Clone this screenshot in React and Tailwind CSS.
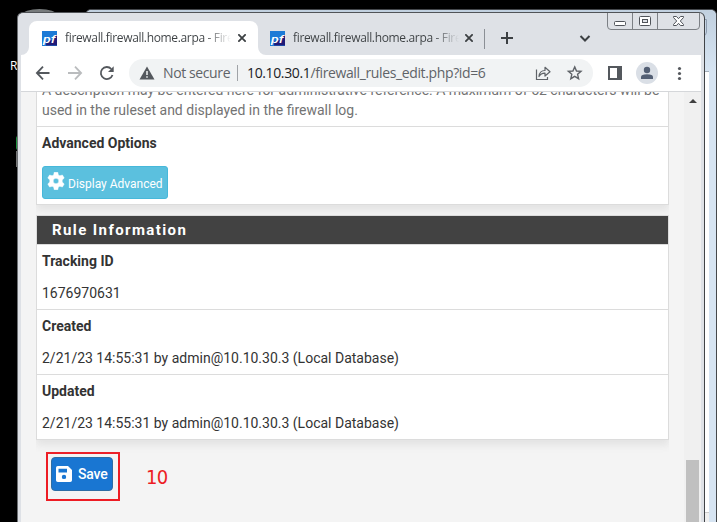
import React from 'react';

function PfIcon() {
  return (
    <svg width="15" height="15" viewBox="0 0 15 15" className="shrink-0">
      <rect width="15" height="15" fill="#1c7ad6" />
      <path d="M15 4V14.500H4L4.500 10L10 9L12 4Z" fill="#211b78" />
      <text x="1" y="11.500" fontSize="11.500" fontWeight="500" fontStyle="italic" fontFamily="Roboto, sans-serif" fill="#fff" textLength="12.500" lengthAdjust="spacingAndGlyphs">pf</text>
    </svg>
  );
}

function CloseIcon() {
  return (
    <svg width="8" height="8" viewBox="0 0 8 8" className="shrink-0">
      <path d="M.3 .3L7.700 7.700M7.700 .3L.3 7.700" stroke="#3c4043" strokeWidth="1.8" />
    </svg>
  );
}

function Tab({ active }) {
  return (
    <div className={active ? 'relative flex h-[34px] w-[229px] items-center rounded-t-lg bg-white pl-[13px]' : 'relative flex h-[34px] w-[226px] items-center pl-[12px]'}>
      <PfIcon />
      <div className="ml-[8px] w-[166px] overflow-hidden whitespace-nowrap bg-linear-to-r from-[#3c4043] from-84% to-transparent bg-clip-text font-['Open_Sans','Noto_Sans',sans-serif] text-[12px] leading-[18px] tracking-[-0.34px] text-transparent">
        firewall.firewall.home.arpa - Fire
      </div>
      <div className={active ? 'ml-[7px]' : 'ml-[6px]'}>
        <CloseIcon />
      </div>
      {active && (
        <>
          <svg width="8" height="8" className="absolute bottom-0 -left-2"><path d="M8 0V8H0A8 8 0 0 0 8 0" fill="#fff" /></svg>
          <svg width="8" height="8" className="absolute -right-2 bottom-0"><path d="M0 0V8H8A8 8 0 0 1 0 0" fill="#fff" /></svg>
        </>
      )}
    </div>
  );
}

function WindowButtons() {
  return (
    <svg width="94" height="18" viewBox="0 0 94 18" className="absolute top-0 right-[3px]" fill="none">
      <path d="M.5 0V13Q.5 16.5 4 16.5H89Q92.500 16.500 92.500 13V0M25.500 0V16M50.500 0V16" stroke="#7c8085" />
      <rect x="7.500" y="8.500" width="11" height="4" rx="1" fill="#fff" stroke="#50545a" />
      <rect x="32.500" y="3.500" width="11" height="9" rx="1" fill="#fff" stroke="#50545a" />
      <rect x="35.500" y="6.500" width="5" height="3" fill="#dee1e6" stroke="#50545a" />
      <path d="M66.500 3.500H69.500L71.500 5.700L73.500 3.500H76.500V4.500L73.300 8L76.500 11.500V12.500H73.500L71.500 10.300L69.500 12.500H66.500V11.500L69.700 8L66.500 4.500Z" fill="#fff" stroke="#50545a" />
    </svg>
  );
}

function Toolbar() {
  return (
    <div className="flex h-[37px] shrink-0 items-center border-b border-[#d5d7da] bg-white">
      <svg width="108" height="36" viewBox="0 0 108 36" fill="none" className="shrink-0">
        <g strokeWidth="1.8">
          <path d="M28.500 18H16.500M22 11.700L15.900 18L22 24.300" stroke="#54585d" />
          <path d="M47 18H59.500M54 11.700L60.100 18L54 24.300" stroke="#babcbe" />
          <path d="M90.300 14A6 6 0 1 0 91.500 20" stroke="#54585d" />
        </g>
        <path d="M92.700 11.300V17H87Z" fill="#54585d" />
      </svg>
      <div className="flex h-7 w-[464px] shrink-0 items-center rounded-full bg-[#f1f3f4] pl-[10px] font-['Open_Sans','Noto_Sans',sans-serif] text-[14px] leading-[20px] whitespace-nowrap text-[#5f6368]">
        <svg width="16" height="14" viewBox="0 0 16 14" className="shrink-0">
          <path d="M8 .5L15.500 13.500H.5Z" fill="#54585d" />
          <path d="M8 5V9M8 10.200V11.800" stroke="#f1f3f4" strokeWidth="1.500" />
        </svg>
        <div className="ml-[8px] w-[74px] tracking-[-0.39px]">Not secure</div>
        <div className="h-4 w-px bg-[#a0a3a7]" />
        <div className="ml-[9px] w-[288px] tracking-[-0.37px]"><span className="text-[#202124]">10.10.30.1</span>/firewall_rules_edit.php?id=6</div>
        <svg width="48" height="16" viewBox="0 0 48 16" fill="none" stroke="#5f6368" className="shrink-0">
          <path d="M1.500 4.500V14.500H12.500V12" strokeWidth="1.200" />
          <path d="M4 11.500Q4.500 5.500 10 5.500V2.300L15 6.800L10 11V8.200Q6 8 4 11.500Z" strokeWidth="1.200" strokeLinejoin="round" />
          <path d="M39.700 1.900L41.500 6L46 6.400L42.600 9.300L43.600 13.700L39.700 11.400L35.800 13.700L36.800 9.300L33.400 6.400L37.900 6Z" strokeWidth="1.400" />
        </svg>
      </div>
      <svg width="108" height="36" viewBox="0 0 108 36" className="shrink-0">
        <rect x="16" y="12" width="12" height="12" fill="#fff" stroke="#54585d" strokeWidth="2" />
        <path d="M24 11H29V25H24Z" fill="#54585d" />
        <circle cx="54" cy="18" r="11" fill="#dadfe6" />
        <circle cx="54" cy="15" r="3.200" fill="#535f74" />
        <path d="M48 24V22Q48 19.300 54 19.300T60 22V24Z" fill="#535f74" />
        <g fill="#54585d"><circle cx="86.500" cy="13.500" r="1.600" /><circle cx="86.500" cy="18.500" r="1.600" /><circle cx="86.500" cy="23.500" r="1.600" /></g>
      </svg>
    </div>
  );
}

function InfoRow({ label, value, last }) {
  return (
    <div className={last ? 'h-[64px] px-[5px] pt-[6px]' : 'h-[65px] border-b border-[#dcdcdc] px-[5px] pt-[6px]'}>
      <div className="h-8 font-bold">{label}</div>
      <div>{value}</div>
    </div>
  );
}

function PageContent() {
  return (
    <div className="flex min-h-0 flex-1 overflow-hidden bg-[#f4f4f4] font-[Roboto,sans-serif] text-[14px] leading-[20px] text-[#333]">
      <div className="w-[663px] shrink-0 pl-[15px]">
        <div className="h-[113px] w-[633px] border border-t-0 border-[#dcdcdc] bg-white shadow-[0_5px_8px_#e2e2e2] [clip-path:inset(0_0_-16px_0)]">
          <div className="h-[35px] overflow-hidden border-b border-[#dcdcdc] px-[5px] whitespace-nowrap text-[#737373]">
            <div className="-mt-[12px]">A description may be entered here for administrative reference. A maximum of 52 characters will be</div>
            <div>used in the ruleset and displayed in the firewall log.</div>
          </div>
          <div className="px-[5px] pt-[6px]">
            <div className="font-bold">Advanced Options</div>
            <button className="mt-[13px] flex h-[33px] w-[126px] items-center rounded-[3px] border border-[#46b8da] bg-[#5bc0de] pl-[4px] text-[12px] leading-[18px] text-white">
              <svg width="18" height="18" viewBox="0 0 18 18" className="-mt-[3px] shrink-0">
                <path fillRule="evenodd" d="M7.200 .3H10.800L11.300 2.900L12.900 3.800L15.400 3L17.200 6.100L15.200 7.900V10.100L17.200 11.900L15.400 15L12.900 14.200L11.300 15.100L10.800 17.700H7.200L6.700 15.100L5.100 14.200L2.600 15L.8 11.900L2.800 10.100V7.900L.8 6.100L2.600 3L5.100 3.800L6.700 2.900ZM9 6.200A2.800 2.800 0 1 0 9 11.800A2.800 2.800 0 1 0 9 6.200" fill="#fff" stroke="#fff" strokeWidth=".5" strokeLinejoin="round" />
              </svg>
              <span className="ml-[3px] pt-[2px] whitespace-nowrap">Display Advanced</span>
            </button>
          </div>
        </div>
        <div className="mt-[10px] h-[225px] w-[633px] border border-[#dcdcdc] bg-white shadow-[0_5px_8px_#e2e2e2] [clip-path:inset(0_0_-16px_0)]">
          <div className="h-[29px] border-b border-[#dcdcdc] bg-[#424242] pl-[15px] text-[15px] leading-[28px] font-bold tracking-[1.4px] text-white">Rule Information</div>
          <InfoRow label="Tracking ID" value="1676970631" />
          <InfoRow label="Created" value="2/21/23 14:55:31 by admin@10.10.30.3 (Local Database)" />
          <InfoRow label="Updated" value="2/21/23 14:55:31 by admin@10.10.30.3 (Local Database)" last />
        </div>
        <div className="mt-[12px] ml-[10px] flex items-center">
          <div className="h-[49px] w-[74px] border-2 border-[#ed1c24] p-[3px]">
            <button className="flex h-[34px] w-[62px] items-center rounded border border-[#2e6da4] bg-[#1976d2] pl-[4px] font-medium text-white">
              <svg width="16" height="16" viewBox="0 0 16 16" className="shrink-0">
                <path fillRule="evenodd" d="M1.800 0H12L16 4V14.200Q16 16 14.200 16H1.800Q0 16 0 14.200V1.800Q0 0 1.800 0ZM2.500 2.800V6.500H11V2.800ZM8 8.700A2.200 2.200 0 1 0 8 13.100A2.200 2.200 0 1 0 8 8.700" fill="#fff" />
              </svg>
              <span className="ml-[6px] tracking-[-0.2px]">Save</span>
            </button>
          </div>
          <div className="ml-[26px] font-['DejaVu_Sans_Condensed','DejaVu_Sans',sans-serif] text-[20px] leading-[20px] [font-stretch:condensed] tracking-[-0.6px] text-[#ed1c24]">10</div>
        </div>
      </div>
      <div className="flex w-[17px] shrink-0 flex-col items-center bg-[#f0f0f0] pt-[7px]">
        <svg width="8" height="4" viewBox="0 0 8 4" className="shrink-0"><path d="M4 0L8 4H0Z" fill="#404040" /></svg>
        <div className="mt-[357px] w-[13px] flex-1 bg-[#c0c0c0]" />
      </div>
    </div>
  );
}

export default function App() {
  return (
    <div className="relative h-[522px] w-[717px] overflow-hidden bg-black font-['Open_Sans',sans-serif]">
      <div className="absolute top-[57px] left-[10px] text-[12px] leading-[18px] text-white">R</div>
      <div className="absolute top-[9px] left-[22px] h-[12px] w-[35px] rounded-[50%] bg-[#777b7c]" />
      <div className="absolute top-[136px] left-[16px] h-[14px] w-[4px] rounded-full bg-[#209540]" />
      <div className="absolute top-[151px] left-[16px] h-[16px] w-[4px] bg-[#777]" />

      {/* Window partly covered by the browser */}
      <div className="absolute top-[9px] left-[85px] flex h-[530px] w-[632px] flex-col rounded-t-md border border-[#44474b] bg-[#d6e4f2]">
        <div className="h-[61px] shrink-0 rounded-t-md bg-linear-to-b from-[#c1d0df] to-[#d6e4f2]">
          <div className="mt-[9px] ml-[600px] h-[17px] w-[21px] rounded-br border border-[#8e9caf]" />
        </div>
        <div className="w-[623px] flex-1 border-t border-[#a6b0ba] bg-white">
          <div className="mt-[440px] h-6 border-t border-[#ccc] bg-[#f0f0f0]" />
        </div>
      </div>

      <div className="absolute top-[12px] left-[17px] flex h-[530px] w-[688px] flex-col rounded-t-md border border-r-[#404347] border-t-[#505357] border-l-[#6d7074] bg-[#dee1e6] pr-[3px] pl-[3px]">
        <WindowButtons />
        <div className="flex h-[42px] shrink-0 items-end pl-[8px]">
          <Tab active />
          <Tab />
          <div className="mb-[6px] h-5 w-px bg-[#8b8f95]" />
          <svg width="112" height="34" viewBox="0 0 112 34" fill="none" stroke="#3c4043" strokeWidth="2" className="shrink-0">
            <path d="M16 17H28M22 11V23" />
            <path d="M95.500 15L100 19.500L104.500 15" />
          </svg>
        </div>
        <Toolbar />
        <PageContent />
      </div>
    </div>
  );
}
